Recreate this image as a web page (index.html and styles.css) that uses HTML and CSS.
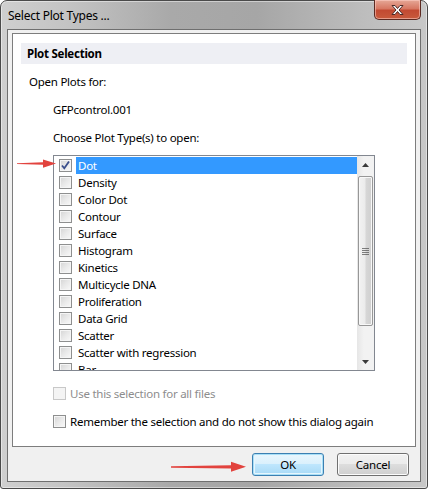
FILE: index.html
```html
<!DOCTYPE html>
<html>
<head>
<meta charset="utf-8">
<link rel="stylesheet" href="styles.css">
</head>
<body>
<div class="window">
  <div class="titlebar">
    <span class="title">Select Plot Types ...</span>
    <div class="close">
      <svg width="15" height="12" viewBox="0 0 15 12"><path d="M2 1.5h3l2.5 3 2.5-3h3l-4 4.5 4 4.5h-3l-2.5-3-2.5 3h-3l4-4.5z" fill="#fff" stroke="#4a2a28" stroke-width="1" stroke-linejoin="round"/></svg>
    </div>
  </div>
  <div class="client">
    <div class="panel">
      <div class="section-head">Plot Selection</div>
      <div class="label first">Open Plots for:</div>
      <div class="label indent">GFPcontrol.001</div>
      <div class="label indent">Choose Plot Type(s) to open:</div>
      <div class="listbox">
        <ul class="items">
          <li class="item selected"><span class="cb checked"><svg width="11" height="11" viewBox="0 0 11 11"><path d="M2 5.5l2.3 2.8L9 1.5" fill="none" stroke="#3b4f8c" stroke-width="1.8"/></svg></span><span class="text">Dot</span></li>
          <li class="item"><span class="cb"></span><span class="text">Density</span></li>
          <li class="item"><span class="cb"></span><span class="text">Color Dot</span></li>
          <li class="item"><span class="cb"></span><span class="text">Contour</span></li>
          <li class="item"><span class="cb"></span><span class="text">Surface</span></li>
          <li class="item"><span class="cb"></span><span class="text">Histogram</span></li>
          <li class="item"><span class="cb"></span><span class="text">Kinetics</span></li>
          <li class="item"><span class="cb"></span><span class="text">Multicycle DNA</span></li>
          <li class="item"><span class="cb"></span><span class="text">Proliferation</span></li>
          <li class="item"><span class="cb"></span><span class="text">Data Grid</span></li>
          <li class="item"><span class="cb"></span><span class="text">Scatter</span></li>
          <li class="item"><span class="cb"></span><span class="text">Scatter with regression</span></li>
          <li class="item"><span class="cb"></span><span class="text">Bar</span></li>
        </ul>
        <div class="scrollbar">
          <div class="sb-btn"><svg width="7" height="4" viewBox="0 0 7 4"><path d="M3.5 0L7 4H0z" fill="#3a3a3a"/></svg></div>
          <div class="thumb"><span class="grip"></span></div>
          <div class="track"></div>
          <div class="sb-btn"><svg width="7" height="4" viewBox="0 0 7 4"><path d="M0 0h7L3.5 4z" fill="#3a3a3a"/></svg></div>
        </div>
      </div>
      <div class="check-row disabled"><span class="cb"></span><span>Use this selection for all files</span></div>
      <div class="check-row"><span class="cb"></span><span>Remember the selection and do not show this dialog again</span></div>
    </div>
    <div class="buttons">
      <div class="btn default">OK</div>
      <div class="btn">Cancel</div>
    </div>
  </div>
  <svg class="arrow arrow-list" width="40" height="10" viewBox="0 0 40 10"><path d="M0 4.2L26 3.3V0.5L39 4.5 26 8.7V5.8L0 5z" fill="#e2433e"/></svg>
  <svg class="arrow arrow-ok" width="76" height="12" viewBox="0 0 76 12"><path d="M0 5.3L60 4.2V0.8L75 5.8 60 10.8V7.4L0 6.7z" fill="#e2433e"/></svg>
</div>
</body>
</html>
```

FILE: styles.css
```css
* { box-sizing: border-box; }
html, body { margin: 0; padding: 0; background: #fff; }
body {
  font-family: "Noto Sans", "Open Sans", sans-serif;
  font-size: 11.5px;
  letter-spacing: -0.25px;
  color: #000;
}

.window {
  position: relative;
  width: 428px;
  height: 489px;
  border: 1px solid #4a4a4a;
  border-radius: 7px 7px 3px 3px;
  background: linear-gradient(to right, #cfcfcf 0%, #c4c4c4 15%, #a9a9a9 40%, #a6a6a6 60%, #bdbdbd 85%, #c8c8c8 100%);
  padding: 0 6px 6px 6px;
  display: flex;
  flex-direction: column;
  box-shadow: inset 0 0 0 1px rgba(255,255,255,0.45);
}

.titlebar {
  height: 28px;
  display: flex;
  justify-content: space-between;
  align-items: flex-start;
}
.title {
  padding-left: 1px;
  line-height: 29px;
  font-size: 12px;
  color: #000;
}
.close {
  width: 47px;
  height: 20px;
  margin-top: -1px;
  border: 1px solid #5c2a22;
  border-top: none;
  border-radius: 0 0 5px 5px;
  background: linear-gradient(to bottom, #e6a897 0%, #d77863 45%, #c24a32 55%, #c85a3c 100%);
  box-shadow: inset 0 0 0 1px rgba(255,210,200,0.55);
  display: flex;
  align-items: center;
  justify-content: center;
}

.client {
  flex: 1;
  border: 1px solid #6f6f6f;
  background: #f0f0f0;
  padding: 3px 4px 4px 4px;
  display: flex;
  flex-direction: column;
}

.panel {
  height: 414px;
  border: 1px solid #7d7d7d;
  background: #fff;
  padding: 9px 8px 0 8px;
}
.section-head {
  height: 21px;
  line-height: 21px;
  background: #eeeff4;
  font-weight: bold;
  padding-left: 6px;
}
.label { height: 16px; line-height: 16px; white-space: nowrap; }
.label.first { margin: 10px 0 0 8px; }
.label.indent { margin: 12px 0 0 32px; }

.listbox {
  margin: 9px 0 0 32px;
  width: 322px;
  height: 216px;
  border: 1px solid #828790;
  display: flex;
}
.items {
  list-style: none;
  margin: 0;
  padding: 1px 0 0 0;
  flex: 1;
  overflow: hidden;
}
.item {
  height: 17px;
  display: flex;
  align-items: center;
  white-space: nowrap;
}
.item .cb { margin-left: 5px; }
.item .text {
  flex: 1;
  margin-left: 4px;
  padding-left: 2px;
  height: 17px;
  line-height: 17px;
}
.item.selected .text { background: #3399ff; color: #fff; }

.cb {
  width: 13px;
  height: 13px;
  flex: none;
  border: 1px solid #8e8f8f;
  background: linear-gradient(135deg, #d4d4d4 0%, #e9e9e9 50%, #f9f9f9 100%);
  box-shadow: inset 0 0 0 1px #f5f5f5;
  display: flex;
  align-items: center;
  justify-content: center;
}

.scrollbar {
  width: 17px;
  display: flex;
  flex-direction: column;
  background: linear-gradient(to right, #e6e6e6, #f2f2f2 40%, #f2f2f2);
}
.sb-btn {
  height: 17px;
  display: flex;
  align-items: center;
  justify-content: center;
}
.thumb {
  margin: 3px 1px 0 1px;
  height: 150px;
  border: 1px solid #979797;
  border-radius: 2px;
  background: linear-gradient(to right, #f2f2f2 0%, #ebebeb 45%, #d6d6d6 55%, #cfcfcf 100%);
  box-shadow: inset 0 0 0 1px #f8f8f8;
  display: flex;
  align-items: center;
  justify-content: center;
}
.grip {
  width: 7px;
  height: 7px;
  background: repeating-linear-gradient(to bottom, #4d4d4d 0 1px, transparent 1px 2px);
  opacity: 0.7;
}
.track { flex: 1; }

.check-row {
  height: 17px;
  display: flex;
  align-items: center;
  margin-left: 32px;
  white-space: nowrap;
}
.check-row .cb { margin-right: 4px; }
.check-row.disabled { margin-top: 14px; color: #8d8d8d; }
.check-row.disabled .cb { border-color: #c8c8c8; background: #f4f4f4; box-shadow: none; }
.check-row + .check-row { margin-top: 11px; }

.buttons {
  display: flex;
  justify-content: flex-end;
  gap: 13px;
  margin-top: 6px;
  padding-right: 7px;
}
.btn {
  width: 72px;
  height: 23px;
  border: 1px solid #707070;
  border-radius: 3px;
  background: linear-gradient(to bottom, #f2f2f2 0%, #ebebeb 50%, #dddddd 50%, #cfcfcf 100%);
  box-shadow: inset 0 0 0 1px #fcfcfc;
  display: flex;
  align-items: center;
  justify-content: center;
}
.btn.default {
  border-color: #3c7fb1;
  background: linear-gradient(to bottom, #eaf6fd 0%, #d9f0fc 50%, #bee6fd 50%, #a7d9f5 100%);
  box-shadow: inset 0 0 0 1px #a8dff7, inset 0 0 0 2px #e6f5fd;
}

.arrow { position: absolute; }
.arrow-list { left: 16px; top: 158px; }
.arrow-ok { left: 170px; top: 460px; }
```
